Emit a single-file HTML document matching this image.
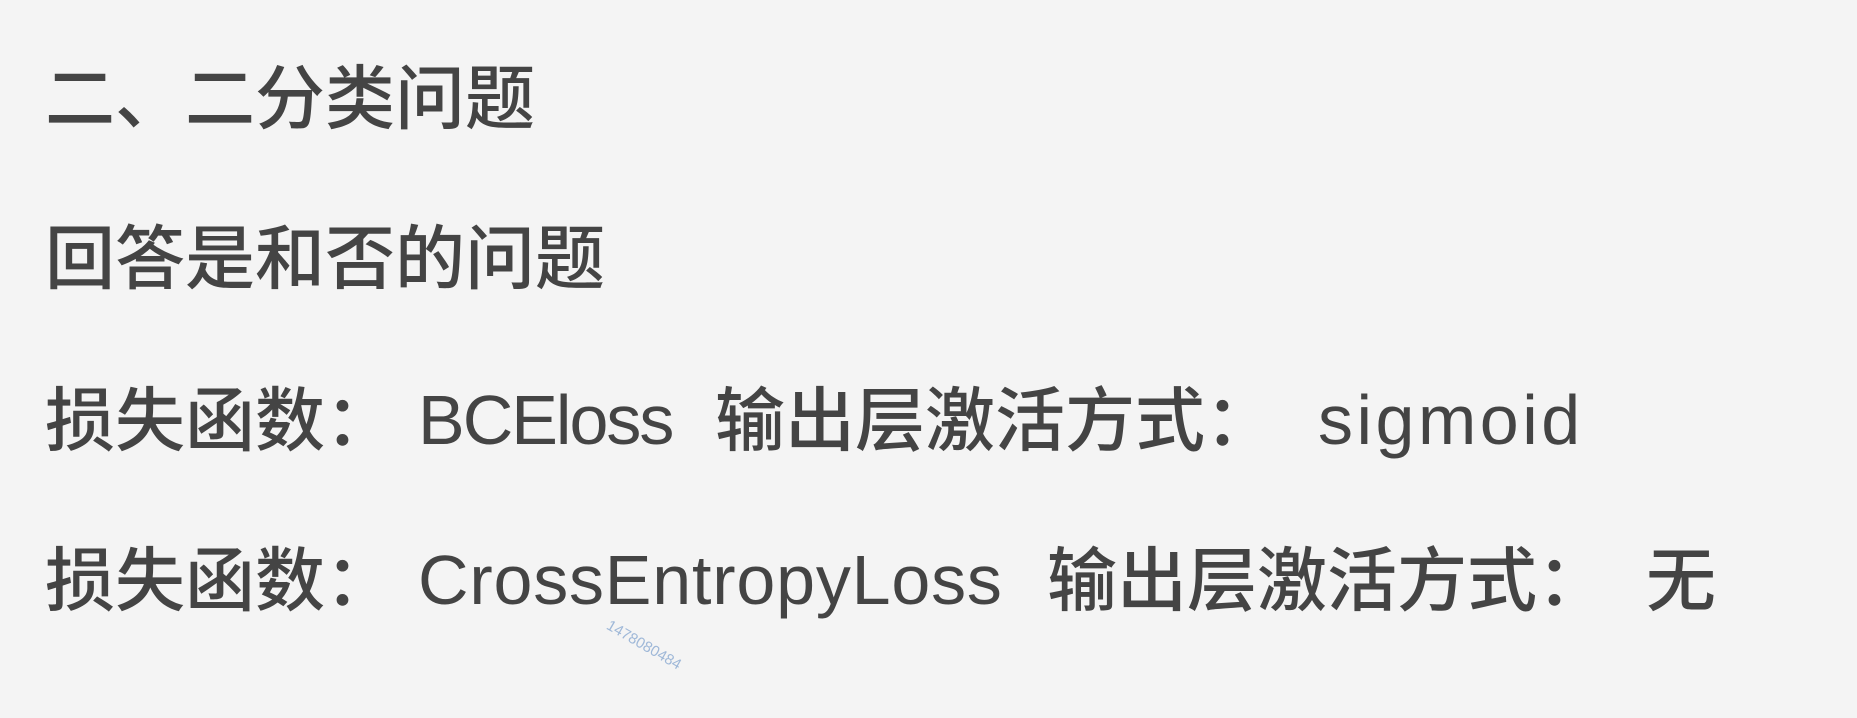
<!DOCTYPE html>
<html><head><meta charset="utf-8"><style>
html,body{margin:0;padding:0;}
body{width:1857px;height:718px;background:#f4f4f4;position:relative;overflow:hidden;
font-family:"Liberation Sans","Noto Sans CJK SC",sans-serif;color:#444;}
.t{position:absolute;font-size:70px;line-height:70px;white-space:nowrap;}
.c{font-family:"Noto Sans CJK SC",sans-serif;font-weight:500;margin-top:-4px;}
.w{position:absolute;left:612px;top:617px;font-size:15px;color:#9fb8d8;transform:rotate(30deg);transform-origin:left top;font-family:"Liberation Sans",sans-serif;}
</style></head><body>
<div class="t c" style="left:45px;top:63px">二、二分类问题</div>
<div class="t c" style="left:45px;top:223px">回答是和否的问题</div>
<div class="t c" style="left:45px;top:385px">损失函数：</div>
<div class="t" style="left:418px;top:385px;letter-spacing:-2px">BCEloss</div>
<div class="t c" style="left:715px;top:385px">输出层激活方式：</div>
<div class="t" style="left:1318px;top:385px;letter-spacing:3.5px">sigmoid</div>
<div class="t c" style="left:45px;top:545px">损失函数：</div>
<div class="t" style="left:418px;top:545px;letter-spacing:0.8px">CrossEntropyLoss</div>
<div class="t c" style="left:1047px;top:545px">输出层激活方式：</div>
<div class="t c" style="left:1646px;top:545px">无</div>
<div class="w">1478080484</div>
</body></html>
